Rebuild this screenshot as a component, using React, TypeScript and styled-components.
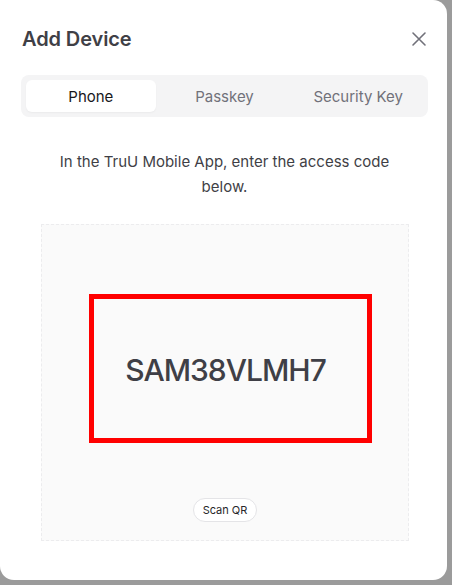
import React, { useState } from "react";
import styled, { createGlobalStyle } from "styled-components";

const Global = createGlobalStyle`
  html, body { margin: 0; padding: 0; background: #9b9b9b; }
  body { font-family: Inter, "Noto Sans", sans-serif; width: 452px; height: 585px; overflow: hidden; }
`;

const Dialog = styled.div`
  box-sizing: border-box;
  width: 447px;
  height: 580px;
  background: #ffffff;
  border-radius: 0 14px 14px 14px;
  padding: 26px 19px 0 21px;
  display: flex;
  flex-direction: column;
`;

const Header = styled.div`
  display: flex;
  align-items: center;
  justify-content: space-between;
  height: 26px;
`;

const Title = styled.h2`
  margin: 0 0 0 1px;
  font-size: 20px;
  font-weight: 600;
  color: #3f3f46;
  letter-spacing: -0.1px;
`;

const CloseButton = styled.button`
  border: none;
  background: transparent;
  padding: 0;
  width: 18px;
  height: 18px;
  display: flex;
  align-items: center;
  justify-content: center;
  color: #71717a;
  cursor: pointer;
`;

const Tabs = styled.div`
  margin-top: 23px;
  height: 42px;
  box-sizing: border-box;
  background: #f4f4f5;
  border-radius: 8px;
  padding: 5px;
  display: grid;
  grid-template-columns: repeat(3, 1fr);
  gap: 4px;
`;

const Tab = styled.button<{ $active?: boolean }>`
  border: none;
  border-radius: 6px;
  font-family: inherit;
  font-size: 15px;
  font-weight: 400;
  background: ${(p) => (p.$active ? "#ffffff" : "transparent")};
  color: ${(p) => (p.$active ? "#18181b" : "#71717a")};
  box-shadow: ${(p) => (p.$active ? "0 1px 2px rgba(0,0,0,0.04)" : "none")};
  cursor: pointer;
`;

const Instruction = styled.p`
  margin: 32px 0 0 0;
  text-align: center;
  font-size: 15px;
  line-height: 25px;
  color: #3f3f46;
  padding: 0 24px;
`;

const CodeArea = styled.div`
  margin: 25px 19px 0 20px;
  height: 317px;
  box-sizing: border-box;
  background: #fafafa;
  border: 1px dashed #ececee;
  display: flex;
  flex-direction: column;
  align-items: center;
  padding-top: 69px;
`;

const Highlight = styled.div`
  box-sizing: border-box;
  width: 283px;
  height: 149px;
  margin-left: 11px;
  border: 5px solid #ff0000;
  display: flex;
  align-items: center;
  justify-content: center;
  padding-right: 10px;
  padding-top: 3px;
`;

const Code = styled.span`
  font-size: 30px;
  font-weight: 500;
  color: #3f3f46;
  letter-spacing: -1px;
`;

const ScanButton = styled.button`
  margin-top: 55px;
  height: 24px;
  padding: 0 9px;
  border: 1px solid #e4e4e7;
  border-radius: 12px;
  background: #ffffff;
  font-family: inherit;
  font-size: 11px;
  color: #27272a;
  cursor: pointer;
`;

export default function App() {
  const [tab, setTab] = useState("Phone");
  const tabs = ["Phone", "Passkey", "Security Key"];
  return (
    <>
      <Global />
      <Dialog>
        <Header>
          <Title>Add Device</Title>
          <CloseButton aria-label="Close">
            <svg width="16" height="16" viewBox="0 0 16 16" fill="none" stroke="currentColor" strokeWidth="1.6" strokeLinecap="round">
              <path d="M2 2L14 14M14 2L2 14" />
            </svg>
          </CloseButton>
        </Header>
        <Tabs>
          {tabs.map((t) => (
            <Tab key={t} $active={tab === t} onClick={() => setTab(t)}>
              {t}
            </Tab>
          ))}
        </Tabs>
        <Instruction>In the TruU Mobile App, enter the access code below.</Instruction>
        <CodeArea>
          <Highlight>
            <Code>SAM38VLMH7</Code>
          </Highlight>
          <ScanButton>Scan QR</ScanButton>
        </CodeArea>
      </Dialog>
    </>
  );
}
